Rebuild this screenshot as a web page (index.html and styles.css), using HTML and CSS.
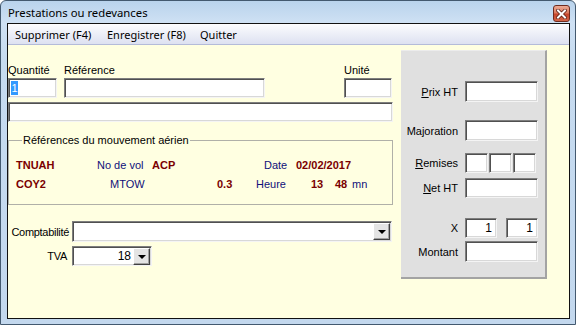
FILE: index.html
```html
<!DOCTYPE html>
<html>
<head>
<meta charset="utf-8">
<link rel="stylesheet" href="styles.css">
</head>
<body>
<div class="window">
  <div class="titlebar">
    <span class="title">Prestations ou redevances</span>
    <span class="close"><svg width="11" height="10" viewBox="0 0 11 10"><path d="M2 1.5 L9 8.5 M9 1.5 L2 8.5" stroke="#5a1c12" stroke-width="3.6" stroke-linecap="square"/><path d="M2 1.5 L9 8.5 M9 1.5 L2 8.5" stroke="#ffffff" stroke-width="2" stroke-linecap="square"/></svg></span>
  </div>
  <div class="client">
    <div class="menubar">
      <span class="mi mi1">Supprimer (F4)</span>
      <span class="mi mi2">Enregistrer (F8)</span>
      <span class="mi">Quitter</span>
    </div>
    <div class="form">
      <div class="left">
        <div class="labels">
          <span class="lab-q">Quantité</span>
          <span class="lab-r">Référence</span>
          <span>Unité</span>
        </div>
        <div class="row1">
          <div class="field f-q"><span class="sel">1</span></div>
          <div class="field f-ref"></div>
          <div class="field f-unit"></div>
        </div>
        <div class="field f-wide"></div>
        <fieldset class="group">
          <legend>Références du mouvement aérien</legend>
          <div class="grow">
            <span class="v c-tnuah">TNUAH</span>
            <span class="k c-novol">No de vol</span>
            <span class="v c-acp">ACP</span>
            <span class="k c-date">Date</span>
            <span class="v">02/02/2017</span>
          </div>
          <div class="grow">
            <span class="v c-coy">COY2</span>
            <span class="k c-mtow">MTOW</span>
            <span class="v c-03">0.3</span>
            <span class="k c-heure">Heure</span>
            <span class="v c-13">13</span>
            <span class="v c-48">48</span>
            <span class="k">mn</span>
          </div>
        </fieldset>
        <div class="crow compta">
          <span class="clabel">Comptabilité</span>
          <div class="field combo c-compta"><span class="ctext"></span><span class="dbtn"><i class="tri"></i></span></div>
        </div>
        <div class="crow tva">
          <span class="clabel tvalabel">TVA</span>
          <div class="field combo c-tva"><span class="ctext">18</span><span class="dbtn"><i class="tri"></i></span></div>
        </div>
      </div>
      <div class="panel">
        <div class="prow p1"><span class="plabel"><u>P</u>rix HT</span><div class="field pf"></div></div>
        <div class="prow p2"><span class="plabel">Majoration</span><div class="field pf"></div></div>
        <div class="prow p3"><span class="plabel"><u>R</u>emises</span><div class="rem"><div class="field rb"></div><div class="field rb"></div><div class="field rb"></div></div></div>
        <div class="prow p4"><span class="plabel"><u>N</u>et HT</span><div class="field pf"></div></div>
        <div class="prow p5"><span class="plabel">X</span><div class="xs"><div class="field xb">1</div><div class="field xb">1</div></div></div>
        <div class="prow p6"><span class="plabel">Montant</span><div class="field pf"></div></div>
      </div>
    </div>
  </div>
</div>
</body>
</html>
```

FILE: styles.css
```css
html, body {
  margin: 0;
  padding: 0;
}
body {
  width: 576px;
  height: 325px;
  overflow: hidden;
  font-family: "Liberation Sans", Arial, sans-serif;
  font-size: 11px;
  color: #000;
  background: #fff;
}
.window {
  box-sizing: border-box;
  width: 576px;
  height: 325px;
  border: 1px solid #43596f;
  border-radius: 6px 6px 0 0;
  background: linear-gradient(to bottom, #b9d3ec 0, #cfe1f4 22px, #c6dbf0 60px, #c3d8ee 100%);
  padding: 0 5px 5px 6px;
  display: flex;
  flex-direction: column;
}
.titlebar {
  height: 22px;
  display: flex;
  justify-content: space-between;
  align-items: flex-start;
}
.title {
  font-family: "Noto Sans", "Open Sans", sans-serif;
  font-size: 11.3px;
  line-height: 16px;
  padding-left: 1px;
  margin-top: 4px;
  color: #000;
}
.close {
  box-sizing: border-box;
  width: 17px;
  height: 17px;
  margin-top: 4px;
  border: 1px solid #6e2b1f;
  border-radius: 3px;
  background: linear-gradient(to bottom, #ecaa94 0, #dc7b60 45%, #c7462c 55%, #d2664a 100%);
  display: flex;
  align-items: center;
  justify-content: center;
}
.client {
  flex: 1;
  border: 1px solid #111;
  background: #ffffe1;
  display: flex;
  flex-direction: column;
  min-height: 0;
}
.menubar {
  height: 20px;
  border-bottom: 1px solid #b4bbd9;
  background: linear-gradient(to bottom, #fcfcfe 0, #eef0f8 45%, #dde1f1 100%);
  display: flex;
  align-items: center;
  font-family: "Noto Sans", "Open Sans", sans-serif;
  font-size: 11px;
  padding-left: 7px;
}
.mi1 { width: 92px; }
.mi2 { width: 93px; }
.form {
  flex: 1;
  display: flex;
  align-items: flex-start;
}
.left {
  width: 385px;
}
.labels {
  display: flex;
  height: 13px;
  line-height: 13px;
  margin-top: 19px;
}
.lab-q { width: 56px; }
.lab-r { width: 280px; }
.row1 {
  display: flex;
  margin-top: 1px;
}
.field {
  box-sizing: border-box;
  height: 20px;
  background: #fff;
  border: 1px solid;
  border-color: #7e7e7e #f4f4f4 #f4f4f4 #7e7e7e;
  box-shadow: inset 1px 1px 0 #505050, inset -1px -1px 0 #d8d8d8;
}
.f-q { width: 49px; padding: 2px 0 0 2px; }
.sel {
  display: inline-block;
  width: 7px;
  height: 14px;
  line-height: 14px;
  background: #3399ff;
  color: #fff;
  text-align: center;
}
.f-ref { width: 201px; margin-left: 7px; }
.f-unit { width: 48px; margin-left: 79px; }
.f-wide { width: 385px; margin-top: 4px; }
.group {
  margin: 12px 0 0 0;
  padding: 9px 0 10px 7px;
  border: 1px solid #b0b0a8;
  width: 385px;
  box-sizing: border-box;
  min-width: 0;
}
.group legend {
  padding: 0 1px;
  margin-left: 6px;
  line-height: 13px;
}
.grow {
  display: flex;
  height: 19px;
  line-height: 19px;
  white-space: nowrap;
}
.v { color: #7a0000; font-weight: bold; }
.k { color: #10107a; }
.c-tnuah { width: 81px; }
.c-novol { width: 55px; }
.c-acp { width: 112px; }
.c-date { width: 32px; }
.c-coy { width: 94px; }
.c-mtow { width: 107px; }
.c-03 { width: 39px; }
.c-heure { width: 55px; }
.c-13 { width: 24px; }
.c-48 { width: 17px; }
.crow {
  display: flex;
  align-items: center;
}
.compta { margin-top: 16px; }
.tva { margin-top: 4px; }
.clabel {
  width: 61px;
  text-align: right;
  margin-right: 3px;
  letter-spacing: -0.3px;
}
.tvalabel {
  width: 59px;
  margin-right: 5px;
}
.combo {
  display: flex;
  align-items: center;
  justify-content: flex-end;
  padding: 1px 1px 1px 2px;
}
.c-compta { width: 320px; height: 21px; }
.c-tva { width: 80px; }
.ctext {
  flex: 1;
  text-align: right;
  font-size: 12px;
  padding-right: 2px;
}
.dbtn {
  box-sizing: border-box;
  width: 17px;
  height: 17px;
  background: #e4e4e4;
  border: 1px solid;
  border-color: #fff #404040 #404040 #fff;
  box-shadow: inset -1px -1px 0 #a0a0a0;
  display: flex;
  align-items: center;
  justify-content: center;
}
.tri {
  display: block;
  width: 0;
  height: 0;
  border-left: 4px solid transparent;
  border-right: 4px solid transparent;
  border-top: 4px solid #000;
  margin-top: 1px;
}
.panel {
  box-sizing: border-box;
  margin-left: 8px;
  margin-top: 5px;
  width: 146px;
  height: 229px;
  background: #e0e0e0;
  border-top: 1px solid #ececec;
  border-right: 2px solid #a3a3a3;
  border-bottom: 2px solid #a3a3a3;
}
.prow {
  display: flex;
  align-items: center;
  height: 20px;
}
.p1 { margin-top: 30px; height: 21px; }
.p2 { margin-top: 18px; height: 21px; }
.p3 { margin-top: 12px; }
.p4 { margin-top: 5px; }
.p5 { margin-top: 20px; }
.p6 { margin-top: 3px; height: 21px; }
.plabel {
  width: 57px;
  text-align: right;
  margin-right: 7px;
  white-space: nowrap;
}
.pf { width: 73px; height: 100%; }
.rem { display: flex; gap: 1px; }
.rb { width: 23px; }
.xs { display: flex; gap: 9px; }
.xb {
  width: 32px;
  text-align: right;
  padding-right: 4px;
  line-height: 18px;
  font-size: 12px;
}
```
